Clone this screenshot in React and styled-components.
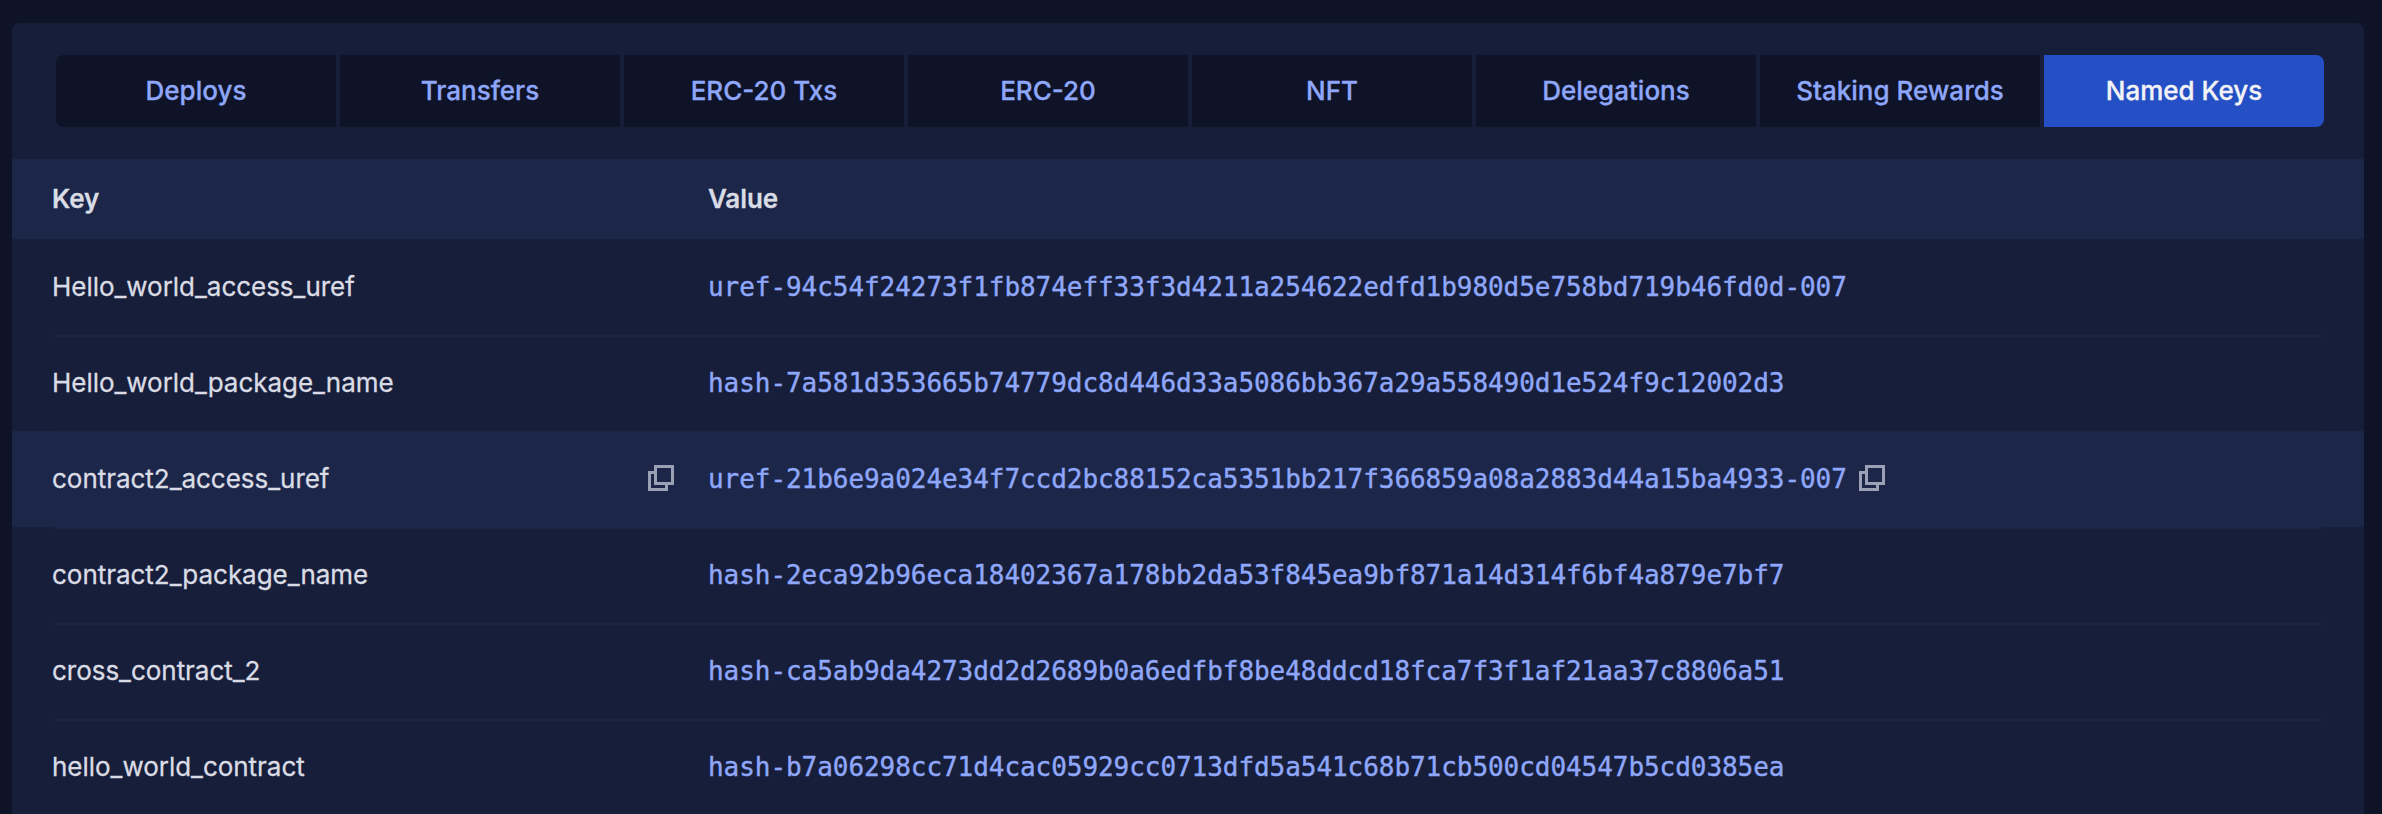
import React from 'react';
import styled, { createGlobalStyle } from 'styled-components';

const Global = createGlobalStyle`
  * { box-sizing: border-box; }
  body { margin: 0; background: #0e1327; height: 814px; overflow: hidden; }
`;

const Page = styled.main`
  height: 814px;
  padding: 23px 18px 0 12px;
  overflow: hidden;
  background: #0e1327;
  font-family: Inter, sans-serif;
  font-size: 26px;
  line-height: 32px;
  color: #dadce5;
`;

const Panel = styled.section`
  height: 791px;
  overflow: hidden;
  background: #171e39;
  border-radius: 8px 8px 0 0;
`;

const Tabs = styled.nav`
  display: grid;
  grid-template-columns: repeat(8, 1fr);
  gap: 4px;
  margin: 32px 40px 32px 44px;
  height: 72px;
  border-radius: 8px;
  overflow: hidden;
`;

const Tab = styled.button`
  border: 0;
  padding: 0;
  font: inherit;
  font-weight: 500;
  white-space: nowrap;
  -webkit-text-stroke: 0.3px currentColor;
  background: ${(p) => (p.$active ? '#2550c5' : '#0e1327')};
  color: ${(p) => (p.$active ? '#f3f3f5' : '#8fa7fa')};
`;

const Columns = styled.div`
  display: grid;
  grid-template-columns: 656px 1fr;
  align-items: center;
`;

const Header = styled(Columns)`
  height: 80px;
  padding: 0 40px;
  font-weight: 600;
  letter-spacing: -0.1px;
  -webkit-text-stroke: 0.3px currentColor;
  background: #1c2648;
`;

const Row = styled.div`
  padding: 0 40px;
  height: 96px;
  background: ${(p) => (p.$hovered ? '#1c2648' : 'transparent')};
`;

const RowContent = styled(Columns)`
  height: 96px;
  padding-bottom: 2px;
  border-top: 2px solid ${(p) => (p.$divided ? '#1a2544' : 'transparent')};
`;

const KeyCell = styled.div`
  display: flex;
  align-items: center;
  justify-content: space-between;
  padding-right: 34px;
  letter-spacing: -0.03px;
  -webkit-text-stroke: 0.3px currentColor;
`;

const ValueCell = styled.div`
  display: flex;
  align-items: center;
  gap: 12px;
  color: #8fa7fa;
`;

const Hash = styled.span`
  font-family: 'DejaVu Sans Mono', monospace;
  letter-spacing: -0.053px;
  white-space: nowrap;
  -webkit-text-stroke: 0.4px currentColor;
`;

const Icon = styled.svg`
  display: block;
  flex: none;
  width: 26px;
  height: 26px;
  margin-bottom: 2px;
  fill: none;
  stroke: #9ba1b5;
  stroke-width: 3;
`;

const CopyIcon = () => (
  <Icon viewBox="0 0 26 26" aria-hidden="true">
    <path d="M7.5 1.5h17v17h-17z" />
    <path d="M6 7.5H1.5v17h17V20" />
  </Icon>
);

const tabs = ['Deploys', 'Transfers', 'ERC-20 Txs', 'ERC-20', 'NFT', 'Delegations', 'Staking Rewards', 'Named Keys'];

const rows = [
  ['Hello_world_access_uref', 'uref-94c54f24273f1fb874eff33f3d4211a254622edfd1b980d5e758bd719b46fd0d-007'],
  ['Hello_world_package_name', 'hash-7a581d353665b74779dc8d446d33a5086bb367a29a558490d1e524f9c12002d3'],
  ['contract2_access_uref', 'uref-21b6e9a024e34f7ccd2bc88152ca5351bb217f366859a08a2883d44a15ba4933-007'],
  ['contract2_package_name', 'hash-2eca92b96eca18402367a178bb2da53f845ea9bf871a14d314f6bf4a879e7bf7'],
  ['cross_contract_2', 'hash-ca5ab9da4273dd2d2689b0a6edfbf8be48ddcd18fca7f3f1af21aa37c8806a51'],
  ['hello_world_contract', 'hash-b7a06298cc71d4cac05929cc0713dfd5a541c68b71cb500cd04547b5cd0385ea'],
];

export default function App() {
  const hovered = 2;
  return (
    <Page>
      <Global />
      <Panel>
        <Tabs>
          {tabs.map((t) => (
            <Tab key={t} $active={t === 'Named Keys'}>{t}</Tab>
          ))}
        </Tabs>
        <Header>
          <span>Key</span>
          <span>Value</span>
        </Header>
        {rows.map(([name, value], i) => (
          <Row key={name} $hovered={i === hovered}>
            <RowContent $divided={i > 0}>
              <KeyCell>
                <span>{name}</span>
                {i === hovered && <CopyIcon />}
              </KeyCell>
              <ValueCell>
                <Hash>{value}</Hash>
                {i === hovered && <CopyIcon />}
              </ValueCell>
            </RowContent>
          </Row>
        ))}
      </Panel>
    </Page>
  );
}
